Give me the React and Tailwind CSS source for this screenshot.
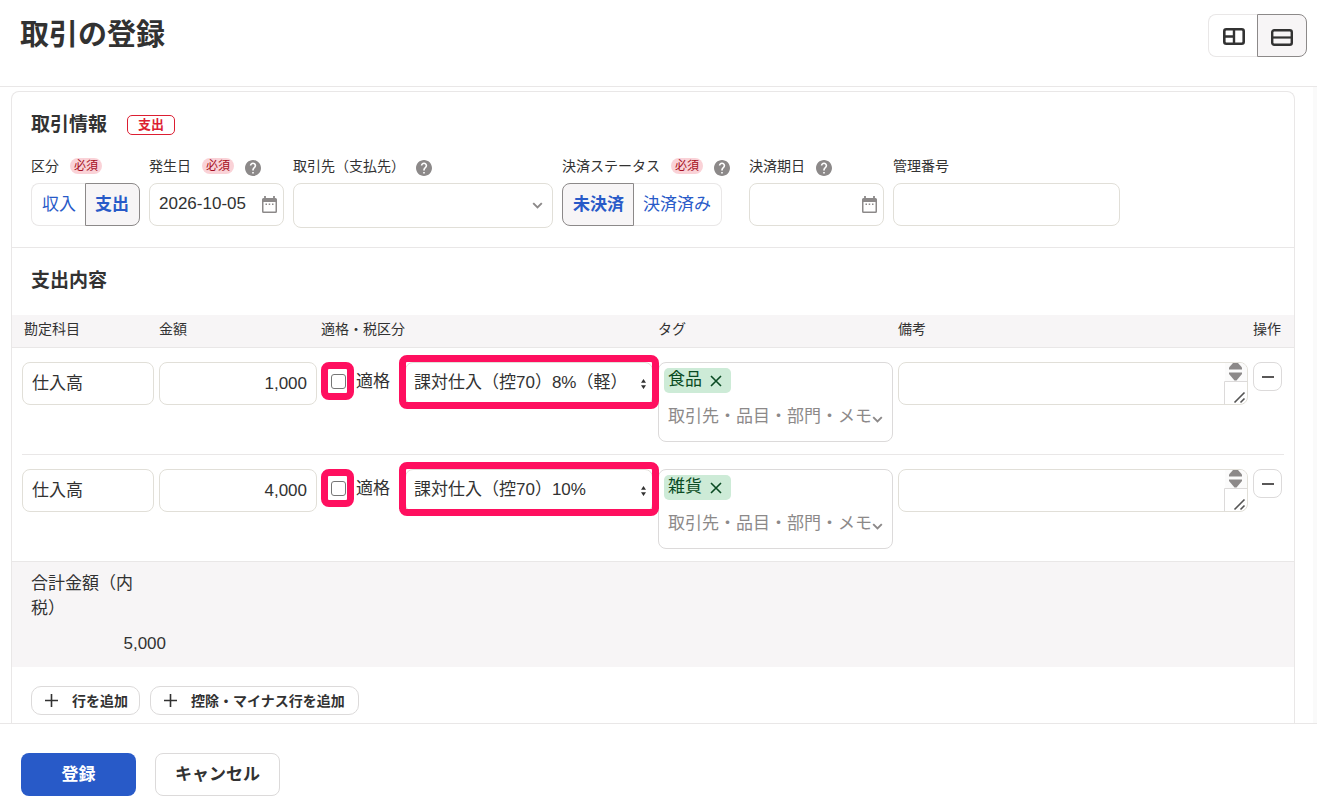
import React, { useState } from "react";

const FIELD =
  "block w-full rounded-lg border border-[#e1dfd8] bg-white text-[17px] leading-6 text-[#323232] outline-none focus:border-[#285ac8]";

const RING = "pointer-events-none absolute rounded-lg border-[7px] border-[#ff0f5f]";

function HelpIcon() {
  return (
    <svg className="mt-1 size-4 shrink-0" viewBox="2 2 20 20" fill="#8c8989" aria-hidden="true">
      <path d="M12 2C6.48 2 2 6.48 2 12s4.48 10 10 10 10-4.48 10-10S17.52 2 12 2zm1 17h-2v-2h2v2zm2.07-7.75l-.9.92C13.45 12.9 13 13.5 13 15h-2v-.5c0-1.1.45-2.1 1.17-2.83l1.24-1.26c.37-.36.59-.86.59-1.41 0-1.1-.9-2-2-2s-2 .9-2 2H8c0-2.21 1.79-4 4-4s4 1.79 4 4c0 .88-.36 1.68-.93 2.25z" stroke="#8c8989" strokeWidth="0" />
    </svg>
  );
}

function CalendarIcon() {
  return (
    <svg className="h-[17px] w-[15px]" viewBox="0 0 15 17" fill="none" aria-hidden="true">
      <path d="M1.500 2h12A1.500 1.500 0 0 1 15 3.500V15.500a1.500 1.500 0 0 1-1.500 1.500h-12A1.500 1.500 0 0 1 0 15.500V3.500A1.500 1.500 0 0 1 1.500 2z" fill="#8c8989" />
      <path d="M3 0v2M12 0v2" stroke="#8c8989" strokeWidth="1.800" />
      <path d="M1.500 6h12v9.500h-12z" fill="#fff" />
      <path d="M3.500 7.500H5V9H3.500zM6.700 7.500h1.500V9H6.700zM10 7.500h1.500V9H10z" fill="#8c8989" />
    </svg>
  );
}

function Chevron() {
  return (
    <svg className="h-[7px] w-[11px]" viewBox="0 0 11 7" fill="none" aria-hidden="true">
      <path d="M1.200 1.200l4.300 4.300 4.300-4.300" stroke="#8c8989" strokeWidth="1.900" />
    </svg>
  );
}

function Required() {
  return (
    <span className="h-4 rounded-full bg-[#fad2d7] px-1 text-[12px] leading-4 text-[#a50f23]">
      必須
    </span>
  );
}

function Field({ id, label, required, help, className, children }) {
  const Tag = id ? "label" : "span";
  return (
    <div className={className}>
      <div className="mb-[7px] flex h-5 items-center gap-[11px] whitespace-nowrap text-[14px] leading-5">
        <Tag htmlFor={id}>{label}</Tag>
        {required && <Required />}
        {help && <HelpIcon />}
      </div>
      {children}
    </div>
  );
}

function Segment({ label, options, initial }) {
  const [value, setValue] = useState(initial);
  return (
    <div role="group" aria-label={label} className="inline-flex h-[43px]">
      {options.map((o, i) => (
        <button
          key={o}
          type="button"
          aria-pressed={o === value}
          onClick={() => setValue(o)}
          className={
            "border px-[9px] text-[17px] text-[#285ac8] " +
            (i === 0 ? "rounded-l-lg pl-[10px] " : "rounded-r-lg pr-[10px] ") +
            (o === value
              ? "border-[#8c8989] bg-[#f7f5f6] font-bold"
              : "border-[#e9e7e7] bg-white " + (i === 0 ? "border-r-0" : "border-l-0"))
          }
        >
          {o}
        </button>
      ))}
    </div>
  );
}

function DateField({ id, value }) {
  return (
    <div className="relative">
      <input id={id} type="text" defaultValue={value} className={FIELD + " h-[43px] pb-px pl-[9px] pr-9"} />
      <button type="button" aria-label="カレンダーを開く" className="absolute right-[7px] top-[13px]">
        <CalendarIcon />
      </button>
    </div>
  );
}

function Spinner() {
  return (
    <svg className="pointer-events-none absolute right-0 top-0 h-[43px] w-6" viewBox="0 0 24 43" fill="none" aria-hidden="true">
      <path d="M1 1h15a7 7 0 0 1 7 7v11H1z" fill="#fbfbfb" />
      <path d="M9 1h5l4 4.500v2H5v-2z" fill="#8c8989" />
      <path d="M5 10.500h13V12l-5.500 6.500h-2L5 12z" fill="#8c8989" />
      <path d="M.5 42.500v-23h23" stroke="#dcdada" />
      <path d="M10.500 40.500l10-10M16.500 40.500l4-4" stroke="#555" strokeWidth="1.600" />
    </svg>
  );
}

function Row({ n, amount, tax, tag, last }) {
  return (
    <tr className="relative align-top">
      <td className="pl-[10px] pr-[5px] pt-[14px]">
        <input aria-label={`勘定科目 ${n}`} defaultValue="仕入高" className={FIELD + " h-[43px] px-[9px] pb-[5px]"} />
      </td>
      <td className="pr-1 pt-[14px]">
        <input aria-label={`金額 ${n}`} defaultValue={amount} className={FIELD + " h-[43px] px-[9px] text-right"} />
      </td>
      <td className="pr-[5px] pt-[14px]">
        <div className="flex h-[43px] items-center">
          <label className="flex shrink-0 items-center gap-[10px] pl-[10px] text-[17px] leading-6">
            <span className="relative mb-1 flex">
              <input
                type="checkbox"
                className="size-[15px] appearance-none rounded-[3px] border border-[#767676] bg-white checked:bg-[#285ac8]"
              />
              <span className={RING + " -bottom-[11px] -left-[10px] -right-2 -top-3"} />
            </span>
            <span className="mb-1">適格</span>
          </label>
          <div className="relative ml-[15px] min-w-0 flex-1">
            <select
              aria-label={`税区分 ${n}`}
              defaultValue={tax}
              className={FIELD + " h-[43px] appearance-none pb-[2px] pl-2 pr-5"}
            >
              <option>課対仕入（控70）8%（軽）</option>
              <option>課対仕入（控70）10%</option>
            </select>
            <svg className="pointer-events-none absolute right-[7px] top-[17px] h-[10px] w-[5px]" viewBox="0 0 5 10" fill="#323232" aria-hidden="true">
              <path d="M2.500 0L5 3.800H0zM2.500 10L0 6.200h5z" />
            </svg>
            <span className={RING + " -bottom-1 -left-[6px] -right-[6px] -top-[7px] z-10"} />
          </div>
        </div>
      </td>
      <td className="pb-[13px] pr-[5px] pt-[14px]">
        <div className="relative h-20 rounded-lg border border-[#dcdada] px-[5px] pt-[5px]">
          <span className="flex h-[25px] w-fit items-center gap-2 rounded-[5px] bg-[#cdebd7] pl-1 pr-[9px] text-[17px] leading-6 text-[#0a4b23]">
            <span className="mb-[2px]">{tag}</span>
            <button type="button" aria-label={`${tag}を削除`}>
              <svg className="size-3" viewBox="0 0 12 12" fill="none" aria-hidden="true">
                <path d="M1 1l10 10M11 1L1 11" stroke="#0a4b23" strokeWidth="1.600" />
              </svg>
            </button>
          </span>
          <input
            aria-label={`タグ ${n}`}
            placeholder="取引先・品目・部門・メモ"
            className="mt-[10px] block w-full bg-transparent pl-1 text-[17px] leading-7 outline-none placeholder:text-[#8c8989]"
          />
          <span className="pointer-events-none absolute right-[9px] top-[53px] flex">
            <Chevron />
          </span>
        </div>
      </td>
      <td className="pr-[5px] pt-[14px]">
        <div className="relative">
          <textarea aria-label={`備考 ${n}`} className={FIELD + " h-[43px] resize-none overflow-hidden border-[#dcdada] px-2 py-2"} />
          <Spinner />
        </div>
      </td>
      <td className="pt-[14px]">
        <button
          type="button"
          aria-label={`${n}行目を削除`}
          className="flex size-[29px] items-center justify-center rounded-lg border border-[#dcdada] bg-white"
        >
          <svg className="size-3" viewBox="0 0 12 12" aria-hidden="true">
            <path d="M0 6h12" stroke="#595757" strokeWidth="2" />
          </svg>
        </button>
        <span className={"absolute bottom-0 h-px bg-[#e9e7e7] " + (last ? "inset-x-0" : "inset-x-[10px]")} />
      </td>
    </tr>
  );
}

function AddButton({ children, className }) {
  return (
    <button
      type="button"
      className={"flex h-[29px] items-center gap-[14px] whitespace-nowrap rounded-[10px] border border-[#dcdada] bg-white pl-[13px] text-[14px] font-bold leading-5 " + className}
    >
      <svg className="size-[13px]" viewBox="0 0 13 13" aria-hidden="true">
        <path d="M0 6.500h13M6.500 0v13" stroke="#323232" strokeWidth="1.600" />
      </svg>
      {children}
    </button>
  );
}

export default function App() {
  return (
    <div className="flex h-screen flex-col bg-white font-['Liberation_Sans','Noto_Sans_CJK_JP',sans-serif] text-[#323232]">
      <header className="flex shrink-0 items-start justify-between border-b border-[#e9e7e7] pb-[29px] pl-5 pr-[10px] pt-[14px]">
        <h1 className="mt-px text-[29px] font-bold leading-10">取引の登録</h1>
        <div role="group" aria-label="表示切替" className="flex h-[43px]">
          <button type="button" aria-label="分割表示" className="flex w-[49px] items-center justify-center rounded-l-lg border border-r-0 border-[#e9e7e7] pl-[2px]">
            <svg className="mt-[2px] h-[17px] w-[22px]" viewBox="0 0 22 17" fill="none" stroke="#323232" aria-hidden="true">
              <rect x="1.300" y="1.300" width="19.400" height="14.400" rx="2" strokeWidth="2.600" />
              <path d="M11 1v15M1 8.500h10" strokeWidth="2.400" />
            </svg>
          </button>
          <button type="button" aria-label="一覧表示" aria-pressed="true" className="flex w-[50px] items-center justify-center rounded-r-lg border border-[#8c8989] bg-[#f7f5f6]">
            <svg className="mt-[3px] h-[17px] w-[22px]" viewBox="0 0 22 17" fill="none" stroke="#323232" aria-hidden="true">
              <rect x="1.200" y="1.200" width="19.600" height="14.600" rx="2" strokeWidth="2.400" />
              <path d="M1 8.500h20" strokeWidth="2.200" />
            </svg>
          </button>
        </div>
      </header>

      <main className="min-h-0 flex-1 overflow-hidden border-r-4 border-[#fafafa] pl-[11px] pr-[18px] pt-1">
        <div className="min-h-full rounded-t-lg border border-b-0 border-[#e9e7e7]">
          <section className="border-b border-[#e9e7e7] px-[19px] pb-[19px] pt-[21px]">
            <div className="mb-[19px] flex items-center gap-5">
              <h2 className="text-[19px] font-bold leading-6">取引情報</h2>
              <span className="rounded-[5px] border border-[#dc1e32] px-[10px] text-[13px] font-bold leading-[18px] text-[#dc1e32]">
                支出
              </span>
            </div>
            <div className="flex items-start gap-[9px]">
              <Field label="区分" required className="w-[109px] shrink-0">
                <Segment label="区分" options={["収入", "支出"]} initial="支出" />
              </Field>
              <Field id="date" label="発生日" required help className="w-[135px] shrink-0">
                <DateField id="date" value="2026-10-05" />
              </Field>
              <Field id="partner" label="取引先（支払先）" help className="w-[260px] shrink-0">
                <div className="relative">
                  <input id="partner" role="combobox" aria-expanded="false" className={FIELD + " h-[45px] border-[#dcdada] pl-2 pr-8"} />
                  <span className="pointer-events-none absolute right-[10px] top-[19px] flex">
                    <Chevron />
                  </span>
                </div>
              </Field>
              <Field label="決済ステータス" required help className="w-[178px] shrink-0">
                <Segment label="決済ステータス" options={["未決済", "決済済み"]} initial="未決済" />
              </Field>
              <Field id="due" label="決済期日" help className="w-[135px] shrink-0">
                <DateField id="due" value="" />
              </Field>
              <Field id="number" label="管理番号" className="w-[227px]">
                <input id="number" className={FIELD + " h-[43px] px-2"} />
              </Field>
            </div>
          </section>

          <section>
            <h2 className="px-[19px] pb-[22px] pt-[21px] text-[19px] font-bold leading-6">支出内容</h2>
            <table className="w-full table-fixed">
              <thead>
                <tr className="border-b border-[#e9e7e7] bg-[#f7f5f6] text-left text-[14px] leading-5">
                  <th className="w-[147px] pb-2 pl-3 pt-1 font-normal">勘定科目</th>
                  <th className="w-[162px] pb-2 pt-1 font-normal">金額</th>
                  <th className="w-[337px] pb-2 pt-1 font-normal">適格・税区分</th>
                  <th className="w-60 pb-2 pt-1 font-normal">タグ</th>
                  <th className="pb-2 pt-1 font-normal">備考</th>
                  <th className="w-[41px] pb-2 pt-1 font-normal">操作</th>
                </tr>
              </thead>
              <tbody>
                <Row n={1} amount="1,000" tax="課対仕入（控70）8%（軽）" tag="食品" />
                <Row n={2} amount="4,000" tax="課対仕入（控70）10%" tag="雑貨" last />
              </tbody>
            </table>
            <dl className="bg-[#f7f5f6] px-[19px] pb-[11px] pt-[9px] text-[17px] leading-[25px]">
              <dt className="w-28">合計金額（内税）</dt>
              <dd className="mt-[10px] w-[135px] text-right">5,000</dd>
            </dl>
            <div className="flex gap-[10px] px-[19px] pt-[19px]">
              <AddButton className="w-[109px]">行を追加</AddButton>
              <AddButton className="w-[209px]">控除・マイナス行を追加</AddButton>
            </div>
          </section>
        </div>
      </main>

      <footer className="flex shrink-0 gap-[19px] border-t border-[#e9e7e7] px-[21px] pb-[14px] pt-[29px]">
        <button type="submit" className="h-[43px] w-[115px] rounded-lg bg-[#285ac8] text-[17px] font-bold text-white">
          登録
        </button>
        <button type="button" className="h-[43px] w-[125px] rounded-lg border border-[#dcdada] bg-white text-[17px] font-bold">
          キャンセル
        </button>
      </footer>
    </div>
  );
}
